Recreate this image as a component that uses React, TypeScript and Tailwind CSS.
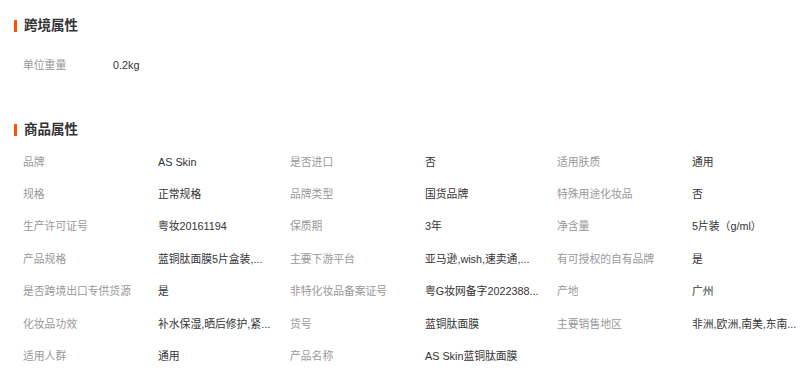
const crossBorder = [{ label: "单位重量", value: "0.2kg" }];

const attrs = [
  { label: "品牌", value: "AS Skin" },
  { label: "是否进口", value: "否" },
  { label: "适用肤质", value: "通用" },
  { label: "规格", value: "正常规格" },
  { label: "品牌类型", value: "国货品牌" },
  { label: "特殊用途化妆品", value: "否" },
  { label: "生产许可证号", value: "粤妆20161194" },
  { label: "保质期", value: "3年" },
  { label: "净含量", value: "5片装（g/ml）" },
  { label: "产品规格", value: "蓝铜肽面膜5片盒装,..." },
  { label: "主要下游平台", value: "亚马逊,wish,速卖通,..." },
  { label: "有可授权的自有品牌", value: "是" },
  { label: "是否跨境出口专供货源", value: "是" },
  { label: "非特化妆品备案证号", value: "粤G妆网备字2022388..." },
  { label: "产地", value: "广州" },
  { label: "化妆品功效", value: "补水保湿,晒后修护,紧..." },
  { label: "货号", value: "蓝铜肽面膜" },
  { label: "主要销售地区", value: "非洲,欧洲,南美,东南..." },
  { label: "适用人群", value: "通用" },
  { label: "产品名称", value: "AS Skin蓝铜肽面膜" },
];

const font = "font-['Liberation_Sans','Noto_Sans_CJK_SC',sans-serif]";

function SectionTitle({ title }: { title: string }) {
  return (
    <div className="flex items-center h-[18px] pl-[14px] gap-[7px]">
      <span className="w-[3px] h-[12px] bg-[#ff4f00]" />
      <h3 className="text-[13.5px] font-bold text-[#333] leading-[18px]">
        {title}
      </h3>
    </div>
  );
}

export default function App() {
  return (
    <div className={`w-[805px] h-[377px] bg-white overflow-hidden pt-[17px] ${font}`}>
      {/* 跨境属性 */}
      <SectionTitle title="跨境属性" />
      <div className="mt-[14px] pl-[23px]">
        {crossBorder.map((item) => (
          <div key={item.label} className="flex items-center h-[32.4px] text-[10.8px]">
            <span className="w-[90px] text-[#999]">{item.label}</span>
            <span className="text-[#333]">{item.value}</span>
          </div>
        ))}
      </div>

      {/* 商品属性 */}
      <div className="mt-[39.6px]">
        <SectionTitle title="商品属性" />
      </div>
      <div className="mt-[6.5px] pl-[23px] grid grid-cols-[267px_267px_267px]">
        {attrs.map((item) => (
          <div key={item.label} className="flex items-center h-[32.4px] text-[10.8px]">
            <span className="w-[135px] shrink-0 text-[#999] whitespace-nowrap">
              {item.label}
            </span>
            <span className="text-[#333] whitespace-nowrap">{item.value}</span>
          </div>
        ))}
      </div>
    </div>
  );
}
